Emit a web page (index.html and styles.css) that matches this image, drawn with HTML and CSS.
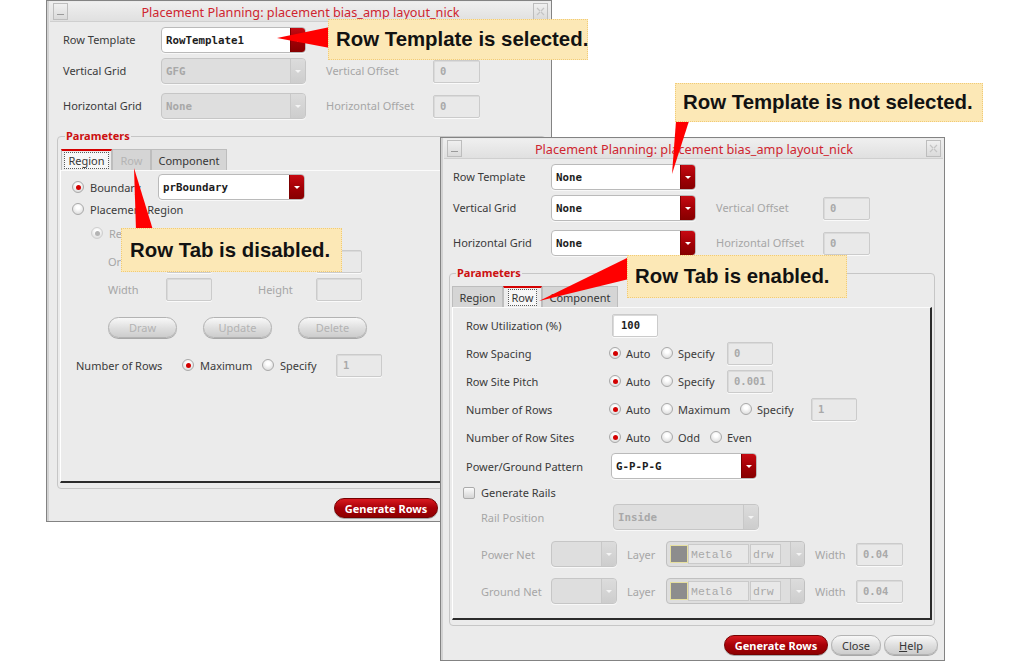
FILE: index.html
```html
<!DOCTYPE html>
<html>
<head>
<meta charset="utf-8">
<title>Placement Planning</title>
<link rel="stylesheet" href="styles.css">
</head>
<body>
<div class="desk">

  <!-- Dialog A: Row Template selected -->
  <section class="dlg dlg-a">
    <header class="tbar">
      <span class="tb-btn tb-min"><i></i></span>
      <span class="tb-title">Placement Planning: placement bias_amp layout_nick</span>
      <span class="tb-btn tb-close"><svg width="11" height="11" viewBox="0 0 11 11"><path d="M2 2 L5 5 M9 2 L6 5 M2 9 L5 6 M9 9 L6 6" stroke="#c4c4c4" stroke-width="1.2" fill="none"/></svg></span>
    </header>
    <div class="topgrid">
      <span class="lbl">Row Template</span>
      <div class="combo"><span class="cv">RowTemplate1</span><span class="cb"></span></div>
      <span></span><span></span>
      <span class="lbl">Vertical Grid</span>
      <div class="combo dis"><span class="cv">GFG</span><span class="cb"></span></div>
      <span class="lbl dim off">Vertical Offset</span>
      <span class="fld">0</span>
      <span class="lbl">Horizontal Grid</span>
      <div class="combo dis"><span class="cv">None</span><span class="cb"></span></div>
      <span class="lbl dim off">Horizontal Offset</span>
      <span class="fld">0</span>
    </div>
    <fieldset class="params">
      <legend>Parameters</legend>
      <div class="tabs">
        <span class="tab t-reg sel"><span>Region</span></span>
        <span class="tab t-row dis">Row</span>
        <span class="tab t-comp">Component</span>
      </div>
      <div class="panel">
        <div class="prow a1">
          <span class="opt"><span class="rad on"></span><span class="w-bnd">Boundary</span></span>
          <div class="combo w147"><span class="cv">prBoundary</span><span class="cb"></span></div>
        </div>
        <div class="prow a2">
          <span class="opt"><span class="rad"></span><span>Placement Region</span></span>
        </div>
        <div class="prow a3">
          <span class="opt"><span class="rad dis on"></span><span class="dim">Rectangle</span></span>
        </div>
        <div class="prow a4">
          <span class="dim w-org">Origin</span>
          <span class="fld w46"></span>
          <span class="w-hgt"></span>
          <span class="fld w46"></span>
        </div>
        <div class="prow a5">
          <span class="dim w-org">Width</span>
          <span class="fld w46"></span>
          <span class="dim w-hgt">Height</span>
          <span class="fld w46"></span>
        </div>
        <div class="prow a6">
          <span class="btn dis">Draw</span>
          <span class="btn dis">Update</span>
          <span class="btn dis">Delete</span>
        </div>
        <div class="prow a7">
          <span class="w-nrows">Number of Rows</span>
          <span class="opt w80"><span class="rad on"></span><span>Maximum</span></span>
          <span class="opt w74"><span class="rad"></span><span>Specify</span></span>
          <span class="fld w46">1</span>
        </div>
      </div>
    </fieldset>
    <footer class="foot foot-a">
      <span class="btn red">Generate Rows</span>
    </footer>
  </section>

  <!-- Dialog B: Row Template not selected -->
  <section class="dlg dlg-b">
    <header class="tbar">
      <span class="tb-btn tb-min"><i></i></span>
      <span class="tb-title">Placement Planning: placement bias_amp layout_nick</span>
      <span class="tb-btn tb-close"><svg width="11" height="11" viewBox="0 0 11 11"><path d="M2 2 L5 5 M9 2 L6 5 M2 9 L5 6 M9 9 L6 6" stroke="#c4c4c4" stroke-width="1.2" fill="none"/></svg></span>
    </header>
    <div class="topgrid">
      <span class="lbl">Row Template</span>
      <div class="combo"><span class="cv">None</span><span class="cb"></span></div>
      <span></span><span></span>
      <span class="lbl">Vertical Grid</span>
      <div class="combo"><span class="cv">None</span><span class="cb"></span></div>
      <span class="lbl dim off">Vertical Offset</span>
      <span class="fld">0</span>
      <span class="lbl">Horizontal Grid</span>
      <div class="combo"><span class="cv">None</span><span class="cb"></span></div>
      <span class="lbl dim off">Horizontal Offset</span>
      <span class="fld">0</span>
    </div>
    <fieldset class="params">
      <legend>Parameters</legend>
      <div class="tabs">
        <span class="tab t-reg">Region</span>
        <span class="tab t-row sel"><span>Row</span></span>
        <span class="tab t-comp">Component</span>
      </div>
      <div class="panel">
        <div class="rrow first">
          <span class="rlbl">Row Utilization (%)</span>
          <span class="fld on w46 ml3">100</span>
        </div>
        <div class="rrow">
          <span class="rlbl">Row Spacing</span>
          <span class="opt w52"><span class="rad on"></span><span>Auto</span></span>
          <span class="opt w66"><span class="rad"></span><span>Specify</span></span>
          <span class="fld w46">0</span>
        </div>
        <div class="rrow">
          <span class="rlbl">Row Site Pitch</span>
          <span class="opt w52"><span class="rad on"></span><span>Auto</span></span>
          <span class="opt w66"><span class="rad"></span><span>Specify</span></span>
          <span class="fld w46">0.001</span>
        </div>
        <div class="rrow">
          <span class="rlbl">Number of Rows</span>
          <span class="opt w52"><span class="rad on"></span><span>Auto</span></span>
          <span class="opt w79"><span class="rad"></span><span>Maximum</span></span>
          <span class="opt w71"><span class="rad"></span><span>Specify</span></span>
          <span class="fld w46">1</span>
        </div>
        <div class="rrow">
          <span class="rlbl">Number of Row Sites</span>
          <span class="opt w52"><span class="rad on"></span><span>Auto</span></span>
          <span class="opt w49"><span class="rad"></span><span>Odd</span></span>
          <span class="opt"><span class="rad"></span><span>Even</span></span>
        </div>
        <div class="rrow pg">
          <span class="rlbl">Power/Ground Pattern</span>
          <div class="combo w146 ml2"><span class="cv">G-P-P-G</span><span class="cb"></span></div>
        </div>
        <div class="rrow rails">
          <span class="chk"></span><span>Generate Rails</span>
        </div>
        <div class="rrow railpos">
          <span class="dim w-rp">Rail Position</span>
          <div class="combo dis w146 ml2"><span class="cv">Inside</span><span class="cb"></span></div>
        </div>
        <div class="rrow net">
          <span class="dim w-net">Power Net</span>
          <div class="combo dis w66"><span class="cv"></span><span class="cb"></span></div>
          <span class="dim w-layer">Layer</span>
          <div class="layer">
            <span class="swatch"></span>
            <span class="lf lf-name">Metal6</span>
            <span class="lf lf-purp">drw</span>
            <span class="cb"></span>
          </div>
          <span class="dim w-width">Width</span>
          <span class="fld w47">0.04</span>
        </div>
        <div class="rrow net">
          <span class="dim w-net">Ground Net</span>
          <div class="combo dis w66"><span class="cv"></span><span class="cb"></span></div>
          <span class="dim w-layer">Layer</span>
          <div class="layer">
            <span class="swatch"></span>
            <span class="lf lf-name">Metal6</span>
            <span class="lf lf-purp">drw</span>
            <span class="cb"></span>
          </div>
          <span class="dim w-width">Width</span>
          <span class="fld w47">0.04</span>
        </div>
      </div>
    </fieldset>
    <footer class="foot">
      <span class="btn red">Generate Rows</span>
      <span class="btn b-close">Close</span>
      <span class="btn b-help"><u>H</u>elp</span>
    </footer>
  </section>

  <!-- Annotation arrows -->
  <svg class="arrows" width="1013" height="664" viewBox="0 0 1013 664">
    <polygon points="277,38 330,27 330,48" fill="#ff0000"/>
    <polygon points="676,121 689,121 672,174" fill="#ff0000"/>
    <polygon points="134,168 136,230 153,230" fill="#ff0000"/>
    <polygon points="539,301 629,257 629,279" fill="#ff0000"/>
  </svg>

  <!-- Callouts -->
  <div class="callout c1">Row Template is selected.</div>
  <div class="callout c2">Row Template is not selected.</div>
  <div class="callout c3">Row Tab is disabled.</div>
  <div class="callout c4">Row Tab is enabled.</div>
</div>
</body>
</html>
```

FILE: styles.css
```css
* { box-sizing: border-box; }
html, body { margin: 0; padding: 0; }
body {
  width: 1013px;
  height: 664px;
  overflow: hidden;
  background: #ffffff;
  font-family: "Noto Sans", "Open Sans", sans-serif;
  font-size: 11px;
  color: #3a3a3a;
}
.desk { position: relative; width: 1013px; height: 664px; }

/* ---------- dialog windows ---------- */
.dlg {
  position: absolute;
  display: flex;
  flex-direction: column;
  background: #ebebeb;
  border: 1px solid #838383;
  box-shadow: inset 2px 0 0 #d2d2d2;
}
.dlg-a { left: 46px; top: 0; width: 506px; height: 522px; }
.dlg-b { left: 440px; top: 137px; width: 505px; height: 524px; }

.tbar {
  height: 20px;
  margin: 1px 1px 0 3px;
  display: flex;
  align-items: center;
  background: linear-gradient(#efefef, #e0e0e0);
  border-bottom: 1px solid #cfcfcf;
}
.tb-btn {
  width: 15px;
  height: 17px;
  border: 1px solid #bdbdbd;
  background: linear-gradient(#f0f0f0, #dadada);
  display: flex;
  align-items: center;
  justify-content: center;
  flex: none;
}
.tb-min { margin-left: 3px; align-items: flex-end; padding-bottom: 4px; }
.tb-min i { display: block; width: 7px; height: 1px; background: #9a9a9a; }
.tb-close { margin-right: 2px; }
.tb-title {
  flex: 1;
  text-align: center;
  color: #cf2530;
  font-size: 12.7px;
  line-height: 18px;
}

/* ---------- top grid ---------- */
.topgrid {
  display: grid;
  grid-template-columns: 98px 145px 127px 47px;
  grid-template-rows: 31px 35px 26px;
  align-items: start;
  padding-top: 5px;
}
.dlg-a .topgrid { padding-left: 16px; }
.dlg-b .topgrid { padding-left: 12px; }
.lbl { height: 26px; line-height: 25px; white-space: nowrap; }
.off { padding-left: 20px; }
.dim { color: #a6a6a6; }
.topgrid .fld { margin-top: 2px; }

/* ---------- inputs ---------- */
.fld {
  display: inline-block;
  height: 23px;
  width: 47px;
  border: 1px solid #cbcbcb;
  border-radius: 2px;
  background: #e9e9e9;
  box-shadow: inset 1px 1px 0 #dadada, 0 1px 0 #fafafa;
  font-family: "DejaVu Sans Mono", monospace;
  font-size: 10.5px;
  font-weight: bold;
  color: #a9a9a9;
  line-height: 21px;
  padding-left: 6px;
  flex: none;
}
.fld.on { background: #ffffff; color: #1e1e1e; padding-left: 8px; }
.w46 { width: 46px; }
.w47 { width: 47px; }
.ml3 { margin-left: 3px; }
.ml2 { margin-left: 2px; }

.combo {
  height: 26px;
  width: 145px;
  display: flex;
  border: 1px solid #bababa;
  border-radius: 4px;
  background: #ffffff;
  box-shadow: 0 1px 0 #f8f8f8;
  overflow: hidden;
  flex: none;
}
.combo .cv {
  flex: 1;
  display: flex;
  align-items: center;
  padding-left: 4px;
  font-family: "DejaVu Sans Mono", monospace;
  font-size: 10.8px;
  font-weight: bold;
  color: #1c1c1c;
  white-space: nowrap;
}
.cb {
  width: 15px;
  flex: none;
  display: flex;
  align-items: center;
  justify-content: center;
  background: linear-gradient(#c70a12, #a00005 55%, #860000);
  border-left: 1px solid #7c0000;
}
.cb::after {
  content: "";
  border-left: 3px solid transparent;
  border-right: 3px solid transparent;
  border-top: 3px solid #ffffff;
}
.combo.dis { background: #dedede; border-color: #c6c6c6; }
.combo.dis .cv { color: #a8a8a8; }
.combo.dis .cb { background: linear-gradient(#dcdcdc, #cdcdcd); border-left: 1px solid #c8c8c8; }
.combo.dis .cb::after { border-top-color: #f4f4f4; }
.w147 { width: 147px; }
.w146 { width: 146px; }
.w66 { width: 66px; }

/* ---------- radio / checkbox ---------- */
.opt { display: inline-flex; align-items: center; gap: 6px; flex: none; white-space: nowrap; }
.rad {
  width: 12px;
  height: 12px;
  border-radius: 50%;
  border: 1px solid #a9a9a9;
  background: radial-gradient(circle at 50% 35%, #ffffff 20%, #d2d2d2);
  display: flex;
  align-items: center;
  justify-content: center;
  flex: none;
}
.rad.on::after {
  content: "";
  width: 5px;
  height: 5px;
  border-radius: 50%;
  background: #d30000;
}
.rad.dis { border-color: #cfcfcf; }
.rad.dis.on::after { background: #b4b4b4; }
.chk {
  width: 12px;
  height: 12px;
  border: 1px solid #ababab;
  border-radius: 2px;
  background: linear-gradient(#fbfbfb, #d5d5d5);
  flex: none;
}

/* ---------- parameters group ---------- */
.params {
  border: 1px solid #c6c6c6;
  border-radius: 4px;
  padding: 0 2px 5px 2px;
  margin: 10px 5px 0 10px;
  min-width: 0;
}
.dlg-b .params { margin: 10px 9px 0 8px; }
.params legend {
  color: #cc1010;
  font-weight: bold;
  font-size: 11px;
  line-height: 14px;
  padding: 0 1px;
  margin-left: 5px;
}
.dlg-b .params legend { margin-left: 4px; }
.tabs { display: flex; height: 21px; margin-top: 6px; }
.dlg-a .tabs { margin-left: 1px; }
.tab {
  height: 21px;
  display: flex;
  align-items: center;
  justify-content: center;
  background: #d5d5d5;
  border: 1px solid #bdbdbd;
  border-bottom: none;
  color: #363636;
  white-space: nowrap;
}
.tab.sel { background: #ececec; border-top: 2px solid #d40000; }
.tab.sel span {
  border: 1px dotted #5a5a5a;
  background: #f7f7f7;
  line-height: 15px;
  padding: 0 3px;
}
.tab.dis { color: #b4b4b4; }
.t-reg { width: 51px; }
.t-row { width: 39px; }
.t-comp { width: 76px; }

.panel {
  height: 313px;
  background: #ebebeb;
  border-top: 1px solid #fbfbfb;
  border-left: 1px solid #ffffff;
  border-right: 2px solid #2b2b2b;
  border-bottom: 2px solid #2b2b2b;
  display: flex;
  flex-direction: column;
}

/* left panel rows */
.prow { display: flex; align-items: center; flex: none; white-space: nowrap; }
.a1 { margin-top: 3px; height: 26px; padding-left: 11px; }
.a1 .w-bnd { width: 68px; }
.a2 { height: 18px; padding-left: 11px; }
.a3 { margin-top: 4px; height: 22px; padding-left: 30px; }
.a4 { margin-top: 6px; height: 23px; padding-left: 47px; }
.a5 { margin-top: 5px; height: 23px; padding-left: 47px; }
.w-org { width: 58px; }
.w-hgt { width: 58px; margin-left: 46px; }
.a6 { margin-top: 16px; height: 21px; padding-left: 47px; gap: 26px; }
.a6 .btn { width: 69px; }
.a7 { margin-top: 16px; height: 22px; padding-left: 15px; }
.w-nrows { width: 106px; }
.w80 { width: 80px; }
.w74 { width: 74px; }

/* right panel rows */
.rrow { display: flex; align-items: center; height: 28px; padding-left: 13px; flex: none; white-space: nowrap; }
.rrow.first { margin-top: 3px; }
.rlbl { width: 143px; flex: none; }
.w52 { width: 52px; }
.w66.opt { width: 66px; }
.w79 { width: 79px; }
.w71 { width: 71px; }
.w49 { width: 49px; }
.rrow .opt { gap: 5px; }
.rrow.pg { height: 30px; }
.rrow.rails { height: 23px; padding-left: 10px; gap: 6px; }
.rrow.railpos { height: 26px; padding-left: 28px; }
.w-rp { width: 130px; }
.rrow.net { height: 26px; margin-top: 11px; padding-left: 28px; }
.w-net { width: 70px; }
.w-layer { width: 39px; margin-left: 10px; }
.w-width { width: 41px; margin-left: 10px; }

.layer {
  width: 139px;
  height: 26px;
  display: flex;
  align-items: center;
  border: 1px solid #c0c0c0;
  border-radius: 4px;
  background: #dedede;
  padding-left: 3px;
  overflow: hidden;
  flex: none;
}
.swatch {
  width: 18px;
  height: 18px;
  background: #8d8d8d;
  border: 1px solid #e6df9e;
  flex: none;
}
.lf {
  height: 20px;
  line-height: 19px;
  border: 1px solid #cacaca;
  background: #e8e8e8;
  font-family: "Liberation Mono", monospace;
  font-size: 11.5px;
  color: #a8a8a8;
  padding-left: 2px;
  flex: none;
}
.lf-name { width: 61px; }
.lf-purp { width: 31px; margin-left: 1px; }
.layer .cb {
  height: 100%;
  margin-left: 9px;
  width: 16px;
  background: linear-gradient(#dcdcdc, #cdcdcd);
  border-left: 1px solid #c8c8c8;
}
.layer .cb::after { border-top-color: #f4f4f4; }

/* ---------- buttons ---------- */
.btn {
  height: 21px;
  border-radius: 11px;
  border: 1px solid #b3b3b3;
  background: linear-gradient(#f8f8f8, #dedede 55%, #cdcdcd);
  box-shadow: 0 1px 0 #a8a8a8;
  display: flex;
  align-items: center;
  justify-content: center;
  color: #353535;
  font-size: 11px;
  flex: none;
}
.btn.dis { color: #b3b3b3; }
.btn.red {
  width: 104px;
  border-color: #760000;
  background: linear-gradient(#d81a20, #a80008 50%, #8e0000);
  color: #ffffff;
  font-weight: bold;
}
.b-close { width: 50px; }
.b-help { width: 54px; }
.b-help u { text-decoration: underline; }
.foot {
  display: flex;
  justify-content: flex-end;
  gap: 3px;
  padding: 9px 6px 0 0;
}
.foot-a { padding-right: 113px; }
.foot .btn { height: 20px; }

/* ---------- annotations ---------- */
.arrows { position: absolute; left: 0; top: 0; pointer-events: none; }
.callout {
  position: absolute;
  display: flex;
  align-items: center;
  padding: 0 7px;
  background: #fce8b6;
  border: 1px dotted #f1cb76;
  font-family: "Liberation Sans", Arial, sans-serif;
  font-weight: bold;
  font-size: 20.4px;
  color: #121212;
  white-space: nowrap;
}
.c1 { left: 328px; top: 19px; width: 260px; height: 41px; }
.c2 { left: 675px; top: 83px; width: 308px; height: 39px; }
.c3 { left: 121px; top: 228px; width: 221px; height: 44px; padding-left: 8px; }
.c4 { left: 627px; top: 255px; width: 220px; height: 43px; }
```
